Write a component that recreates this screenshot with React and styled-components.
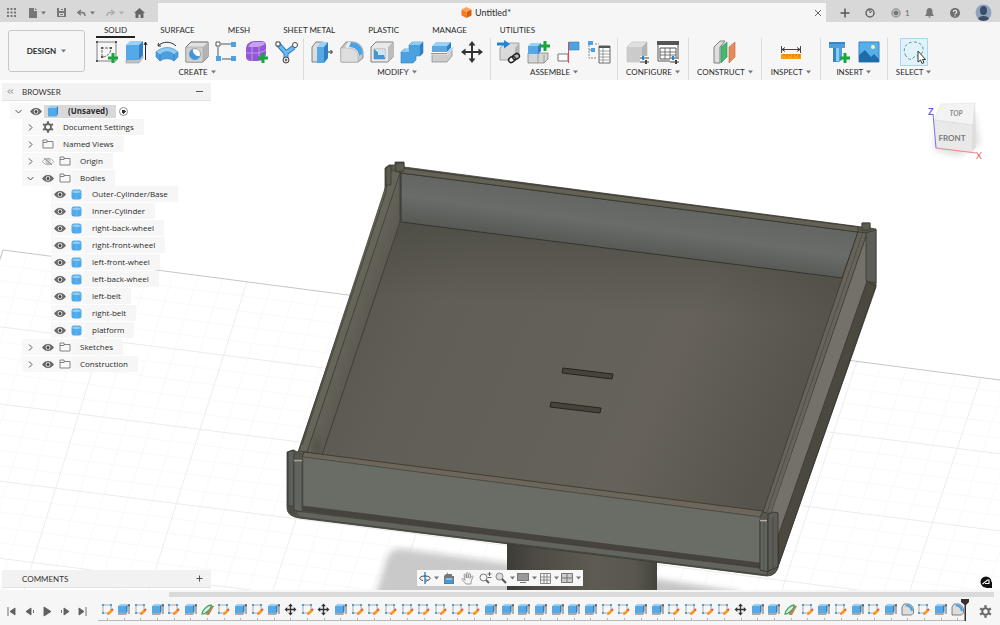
import React from 'react'
import styled, { createGlobalStyle } from 'styled-components'

const GlobalStyle = createGlobalStyle`
  * {
    box-sizing: border-box;
  }

  body {
    margin: 0;
    background: #fff;
    color: #2b2b2b;
    font-family: Lato, "Liberation Sans", sans-serif;
    font-size: 8px;
    line-height: 10px;
  }

  button {
    display: flex;
    align-items: center;
    justify-content: center;
    margin: 0;
    padding: 0;
    border: 0;
    background: none;
    color: inherit;
    font: inherit;
    cursor: pointer;
  }

  svg {
    display: block;
    flex: none;
  }

  ul {
    margin: 0;
    padding: 0;
    list-style: none;
  }
`

const Page = styled.div`
  display: flex;
  flex-direction: column;
  min-height: 100vh;
`

/* ---------- title bar ---------- */

const TitleBar = styled.header`
  display: flex;
  height: 22px;
  padding-top: 3px;
  background: #d8d8d8;
`

const QuickBar = styled.div`
  display: flex;
  align-items: center;
  gap: 2px;
  width: 158px;
  padding: 0 0 0 4px;
  color: #777;
`

const QuickButton = styled.button`
  height: 16px;
  width: ${props => props.$width || 20}px;
  gap: 4px;
  opacity: ${props => (props.$faded ? 0.45 : 1)};
`

const DocumentTab = styled.div`
  flex: 1;
  display: flex;
  align-items: center;
  padding: 0 4px 0 0;
  background: #f6f6f6;
`

const DocumentTitle = styled.h1`
  flex: 1;
  display: flex;
  align-items: center;
  justify-content: center;
  gap: 3px;
  margin: 0;
  font-size: 9px;
  font-weight: 400;
`

const AccountBar = styled.div`
  display: flex;
  align-items: center;
  justify-content: space-between;
  width: 174px;
  padding: 0 8px 0 14px;
  color: #666;
`

const Jobs = styled.button`
  gap: 4px;
`

/* ---------- ribbon ---------- */

const Ribbon = styled.div`
  display: flex;
  height: 58px;
  background: #f6f6f6;
`

const Workspace = styled.button`
  && {
    width: 77px;
    height: 42px;
    margin: 8px 6px 0 8px;
    gap: 5px;
    border: 1px solid #c8c8c8;
    border-radius: 3px;
    font-weight: 700;
  }
`

const RibbonBody = styled.div`
  flex: 1;
`

const Tabs = styled.nav`
  display: flex;
  gap: 17px;
  padding: 3px 0 0 5px;
`

const Tab = styled.a`
  padding: 0 8px 1px;
  border-bottom: 2px solid ${props => (props.$active ? '#222' : 'transparent')};
  color: #2b2b2b;
  text-decoration: none;
`

const Groups = styled.div`
  display: flex;
`

const Group = styled.section`
  display: flex;
  flex-direction: column;
  align-items: center;
  gap: 1px;
  height: 42px;
  padding: 0 ${props => props.$pad}px;
  border-right: 1px solid ${props => (props.$last ? 'transparent' : '#dcdcdc')};
`

const Tools = styled.div`
  display: flex;
`

const ToolButton = styled.button`
  width: 30px;
  height: 28px;
  ${props => props.$active && `
    && {
      width: 28px;
      background: #e2f1fb;
      border: 1px solid #a9d5f1;
    }
  `}
`

const Caption = styled.button`
  gap: 3px;
`

/* ---------- canvas ---------- */

const Canvas = styled.main`
  position: relative;
  flex: 1;
  display: flex;
  flex-direction: column;
  justify-content: space-between;
  min-height: 500px;
  padding: 3px 0 2px;
  overflow: hidden;
`

const Backdrop = styled.div`
  position: absolute;
  inset: 0;

  > svg {
    width: 100%;
    height: 100%;
  }
`

const Panel = styled.aside`
  position: relative;
  width: 211px;
`

const PanelHeader = styled.div`
  display: flex;
  align-items: center;
  height: 18px;
  margin-left: 2px;
  padding: 0 8px 0 5px;
  background: #f2f2f2;
  border-bottom: 1px solid #e2e2e2;
  color: #555;
`

const PanelTitle = styled.h2`
  flex: 1;
  margin: 0;
  padding-left: ${props => props.$indent}px;
  color: #333;
  font-size: 8px;
  font-weight: 400;
`

const Tree = styled.ul`
  display: flex;
  flex-direction: column;
  align-items: flex-start;
  gap: 1px;
  padding: ${props => (props.$root ? '2px 0 0' : '0')};
`

const Row = styled.div`
  display: flex;
  align-items: center;
  width: max-content;
  height: 16px;
  margin-left: ${props => 10 + props.$depth * 12}px;
  color: #2b2b2b;
`

const Slot = styled.span`
  display: flex;
  align-items: center;
  justify-content: center;
  width: 17px;
  height: 16px;
  background: ${props => (props.$clear ? 'transparent' : '#f8f8f8')};
`

const RowLabel = styled.span`
  display: flex;
  align-items: center;
  height: 16px;
  padding: 0 10px 0 7px;
  background: #f6f6f6;
  font-family: "Open Sans", "Noto Sans", sans-serif;
  font-size: 8px;
`

const Selected = styled.span`
  display: flex;
  align-items: center;
  height: 13px;
  background: #d9d9d9;

  ${Slot}, ${RowLabel} {
    height: 13px;
    background: none;
  }

  ${RowLabel} {
    padding-right: 8px;
    font-weight: 700;
  }
`

const Radio = styled.input`
  appearance: none;
  width: 9px;
  height: 9px;
  margin: 0 10px 0 3px;
  border: 1px solid #8a8f96;
  border-radius: 50%;
  background: radial-gradient(circle, #333 0 2px, #fff 2px);
`

const ViewCubeBox = styled.div`
  position: absolute;
  top: 16px;
  right: 10px;
`

const CanvasFooter = styled.div`
  position: relative;
  display: grid;
  grid-template-columns: 1fr auto 1fr;
  align-items: start;
`

const ViewBar = styled.div`
  display: flex;
  align-items: center;
  height: 16px;
  padding: 0 1px;
  background: #f7f7f7;
  color: #666;
`

const ViewButton = styled.button`
  width: ${props => (props.$menu ? 22 : 18)}px;
  height: 16px;
  gap: 3px;
`

const AssistButton = styled.button`
  justify-self: end;
  align-self: end;
  && {
    margin-right: 8px;
  }
`

/* ---------- timeline ---------- */

const Timeline = styled.footer`
  height: 35px;
  padding-top: 2px;
  background: #f6f6f6;
`

const ScrollTrack = styled.div`
  height: 5px;
  margin: 0 6px 0 169px;
  background: #dadada;
`

const TimelineBody = styled.div`
  display: flex;
  align-items: flex-start;
`

const Playback = styled.div`
  display: flex;
  justify-content: space-between;
  width: 82px;
  margin: 8px 12px 0 6px;
  color: #5f5f5f;
`

const Features = styled.div`
  flex: 1;
  display: flex;
  justify-content: space-between;
  margin-top: 5px;
  padding-bottom: 2px;
`

const Feature = styled.button`
  position: relative;
  width: 14px;
  height: 19px;

  && {
    padding-bottom: 5px;
  }

  /* the rail under the history, with one tick for each feature */
  &::before {
    content: '';
    position: absolute;
    bottom: 0;
    left: -2px;
    right: -2px;
    height: 1px;
    background: #b9b9b9;
  }

  &::after {
    content: '';
    position: absolute;
    bottom: 0;
    left: 7px;
    width: 1px;
    height: 3px;
    background: #b9b9b9;
  }
`

const Marker = styled.div`
  margin: 2px 0 0 -4px;
  position: relative;
`

const SettingsButton = styled.button`
  && {
    margin: 8px 8px 0 10px;
  }
`

/* ---------- icons ---------- */

const Caret = () => (
  <svg width="5" height="4" viewBox="0 0 5 4"><path d="M0 .5h5L2.500 3.500z" fill="#777" /></svg>
)

const Ico = ({ size = 24, box = 24, children }) => (
  <svg width={size} height={size} viewBox={`0 0 ${box} ${box}`} fill="none">{children}</svg>
)

const Plus = ({ x, y }) => (
  <path d={`M${x - 5} ${y}h10M${x} ${y - 5}v10`} stroke="#16a63c" strokeWidth="3" />
)

const Sliders = () => (
  <g>
    <path d="M14 18h9M14 22h9" stroke="#444" />
    <path d="M17 16v4" stroke="#1f86d6" strokeWidth="2" />
    <path d="M20 20v4" stroke="#444" strokeWidth="2" />
  </g>
)

const BlueBox = () => (
  <g>
    <path d="M2 6l4-4h12l-3 4z" fill="#9ad0f5" />
    <path d="M2 6h13v14H2z" fill="#56a9e6" />
    <path d="M15 6l3-4v13l-3 5z" fill="#2f7fc2" />
  </g>
)

const toolIcons = {
  sketch: (
    <Ico>
      <path d="M2 2h19v19H2z" stroke="#666" strokeWidth=".8" />
      <path d="M7 17V8h9c0 5-4 9-9 9z" stroke="#666" strokeDasharray="3 1" />
      <path d="M1 1h2v2H1zM20 1h2v2h-2zM1 20h2v2H1zM6 7h2v2H6zM15 7h2v2h-2zM6 16h2v2H6z" fill="#555" />
      <Plus x={18} y={18} />
    </Ico>
  ),
  extrude: (
    <Ico>
      <path d="M1 20l13-.5 4-4V18l-4 5H1z" fill="#c4c4c4" stroke="#888" strokeWidth=".5" />
      <path d="M1 5l4-4h13l-4 4z" fill="#9ad0f5" />
      <path d="M1 5h13v15H1z" fill="#56a9e6" />
      <path d="M14 5l4-4v14l-4 5z" fill="#2f7fc2" />
      <path d="M20.500 20V3M19 5l1.500-3L22 5" stroke="#222" />
    </Ico>
  ),
  revolve: (
    <Ico>
      <path d="M3 6c5-5 13-5 18 0M3 6l.5-3M3 6h3" stroke="#333" />
      <path d="M1 12c6-6 16-6 22 0l-4 3c-4-4-10-4-14 0z" fill="#8fcaf3" stroke="#3585c4" strokeWidth=".6" />
      <path d="M1 12l4 3v6l-4-4zM5 15c4-4 10-4 14 0v6c-4-3-10-3-14 0zM19 15l4-3v5l-4 4z" fill="#4ba1df" stroke="#3585c4" strokeWidth=".6" />
    </Ico>
  ),
  hole: (
    <Ico>
      <path d="M1 7l5-5h17v15l-5 5H1z" fill="#e2e2e2" stroke="#666" />
      <path d="M18 7l5-5v15l-5 5z" fill="#b4b4b4" />
      <path d="M1 7h17v15H1z" fill="#d0d0d0" stroke="#999" strokeWidth=".5" />
      <circle cx="10" cy="14" r="5.500" fill="#fafafa" stroke="#777" strokeWidth=".6" />
      <path d="M8 9a5.500 5.500 0 107 7c-4 1-8-3-7-7z" fill="#3f97da" />
    </Ico>
  ),
  pattern: (
    <Ico>
      <path d="M6 4h10M3 7v9M7 19h9" stroke="#555" />
      <path d="M1 2h4v4H1z" fill="#fff" stroke="#555" />
      <path d="M16 2h5v5h-5zM1 16h5v5H1zM16 16h5v5h-5z" fill="#4ba3e3" />
    </Ico>
  ),
  form: (
    <Ico>
      <path d="M1 9c0-5 4-8 9-8h5c4 0 6 1 6 5v7c0 5-3 8-8 8H7c-4 0-6-1-6-5z" fill="#9257d6" />
      <path d="M3 7c2-4 5-5 9-5h3c3 0 4 0 5 2-3 2-5 3-8 3z" fill="#c6a1f0" />
      <path d="M1 13h13l7-3M7 7v14M14 7v14M8 2L6 7M14 2l-2 5" stroke="#c9a8ef" strokeWidth=".8" />
      <Plus x={18} y={18} />
    </Ico>
  ),
  pipe: (
    <Ico>
      <path d="M3 4l8 9 8-6M11 12v7" stroke="#2f7fc2" strokeWidth="5" />
      <path d="M3 4l8 9 8-6M11 12v7" stroke="#6bb7ee" strokeWidth="3" />
      <path d="M1 2h4v4H1z" fill="#fff" stroke="#444" />
      <circle cx="20" cy="5" r="2.500" fill="#fff" stroke="#444" />
      <circle cx="11" cy="20" r="3" fill="#ddd" stroke="#444" />
      <circle cx="11" cy="20" r="1" fill="#444" />
    </Ico>
  ),
  pressPull: (
    <Ico>
      <path d="M2 7l4-5h7v20H2z" fill="#ddd" stroke="#666" strokeWidth=".8" />
      <path d="M7 7l4-5h7l-4 5z" fill="#9ad0f5" />
      <path d="M7 7h7v16H7z" fill="#56a9e6" />
      <path d="M14 7l4-5v16l-4 5z" fill="#2f7fc2" />
      <path d="M18 12h4M20.500 10l2 2-2 2" stroke="#222" />
    </Ico>
  ),
  fillet: (
    <Ico>
      <path d="M1 8l5-6h6c7 0 11 5 11 11v5l-5 4H1z" fill="#c9c9c9" stroke="#777" strokeWidth=".8" />
      <path d="M8 2h4c7 0 11 5 11 11l-5 3c0-5-4-8-9-8H5z" fill="#eee" />
      <path d="M11 2c7 0 11 4 12 11l-4 3c0-5-4-9-10-9z" fill="#4ba3e3" />
      <path d="M1 8h7c6 0 10 4 10 9v5H1z" fill="#dedede" stroke="#aaa" strokeWidth=".5" />
    </Ico>
  ),
  shell: (
    <Ico>
      <path d="M1 7l5-5h17v15l-5 5H1z" fill="#e9e9e9" stroke="#666" strokeWidth=".8" />
      <path d="M18 7l5-5v15l-5 5z" fill="#bdbdbd" />
      <path d="M4 9h11v10H4z" fill="#fff" stroke="#888" strokeWidth=".6" />
      <path d="M4 9l4 3v3h6l1 4H4z" fill="#3f97da" />
      <path d="M8 10h7v5H8z" fill="#cbe5f8" />
    </Ico>
  ),
  combine: (
    <Ico>
      <path d="M9 5l3-3h11v11l-3 3h-4v4l-3 3H1V12l3-3h5z" fill="#4ba1df" stroke="#3585c4" strokeWidth=".6" />
      <path d="M9 5l3-3h11l-3 3zM1 12l3-3h5v3z" fill="#8fcaf3" />
      <path d="M20 5l3-3v11l-3 3z" fill="#2f7fc2" />
    </Ico>
  ),
  split: (
    <Ico>
      <path d="M2 14h14l6-5v7l-5 6H2z" fill="#cdcdcd" stroke="#777" strokeWidth=".6" />
      <path d="M2 6l4-4h15l-4 4z" fill="#9ad0f5" />
      <path d="M2 6h15v6H2z" fill="#56a9e6" />
      <path d="M17 6l4-4v6l-4 4z" fill="#2f7fc2" />
      <path d="M1 13.500h16l6-6" stroke="#fff" strokeWidth="2" />
      <path d="M1 13.500h16l6-6" stroke="#2f8fdd" strokeWidth=".8" />
    </Ico>
  ),
  move: (
    <Ico>
      <path d="M12 4v16M4 12h16" stroke="#333" strokeWidth="2" />
      <path d="M12 1l3.500 4.500h-7zM12 23l3.500-4.500h-7zM1 12l4.500-3.500v7zM23 12l-4.500-3.500v7z" fill="#333" />
    </Ico>
  ),
  insertLink: (
    <Ico>
      <path d="M3 8l5-5h14v12l-4 5H3z" fill="#dadada" stroke="#888" strokeWidth=".7" />
      <path d="M18 8l4-5v12l-4 5z" fill="#b5b5b5" />
      <path d="M0 4h8" stroke="#1f86d6" strokeWidth="3" />
      <path d="M7 0l6 4-6 4.500z" fill="#1f86d6" />
      <g transform="rotate(-35 17 18)" stroke="#222" strokeWidth="1.500">
        <rect x="11" y="15.500" width="7" height="5" rx="2.500" fill="#f6f6f6" />
        <rect x="16" y="15.500" width="7" height="5" rx="2.500" />
      </g>
    </Ico>
  ),
  newComponent: (
    <Ico>
      <path d="M1 13h20v6l-4 4H1z" fill="#d5d5d5" stroke="#777" strokeWidth=".7" />
      <path d="M11 13v10M17 15v8" stroke="#888" strokeWidth=".7" />
      <path d="M1 6l3-3h10l-3 3z" fill="#9ad0f5" />
      <path d="M1 6h10v8H1z" fill="#56a9e6" />
      <path d="M11 6l3-3v8l-3 3z" fill="#2f7fc2" />
      <Plus x={18} y={6} />
    </Ico>
  ),
  joint: (
    <Ico>
      <path d="M1 14h10v7H1z" fill="#fff" stroke="#777" />
      <path d="M12 2h10v8H12z" fill="#4ba3e3" stroke="#3585c4" strokeWidth=".6" />
      <path d="M11.500 2v21" stroke="#e0484b" />
    </Ico>
  ),
  bom: (
    <Ico>
      <path d="M1 1h5v4H1zM4 8h4v4H4z" fill="#4ba3e3" />
      <path d="M2 5v13h8M2 10h3M8 4h4" stroke="#888" strokeDasharray="2 1" />
      <path d="M12 6h11v17H12z" fill="#fff" stroke="#666" />
      <path d="M12 6h11v2H12z" fill="#555" />
      <path d="M12 11h11M12 14h11M12 17h11M12 20h11M16 8v15" stroke="#888" strokeWidth=".8" />
    </Ico>
  ),
  configureBox: (
    <Ico>
      <path d="M1 7l5-5h15v14l-5 6H1z" fill="#e0e0e0" stroke="#c0c0c0" strokeWidth=".7" />
      <path d="M1 7h15v15H1z" fill="#cbcbcb" />
      <path d="M16 7l5-5v14l-5 6z" fill="#b5b5b5" />
      <path d="M14 16h9v8h-9z" fill="#f6f6f6" />
      <Sliders />
    </Ico>
  ),
  configureTable: (
    <Ico>
      <path d="M2 2h20v19H2z" fill="#fff" stroke="#555" />
      <path d="M1 1h22v4H1z" fill="#555" />
      <path d="M4 8h16v11H4z" stroke="#555" />
      <path d="M4 12h16M4 15h16M9 8v11M14 8v11" stroke="#555" strokeWidth=".8" />
      <path d="M14 17h9v7h-9z" fill="#f6f6f6" />
      <Sliders />
    </Ico>
  ),
  construct: (
    <Ico>
      <path d="M1 7l6-6h5l-5 6v16H1z" fill="#dedede" stroke="#666" strokeWidth=".8" />
      <path d="M8 7l6-5v15l-6 6z" fill="#45b871" stroke="#2c8c52" strokeWidth=".6" />
      <path d="M16 7l6-5v15l-6 6z" fill="#e58a58" stroke="#b9643a" strokeWidth=".6" />
    </Ico>
  ),
  measure: (
    <Ico>
      <path d="M2.500 6v7M21.500 6v7M3 9.500h18M6 7.500l-3 2 3 2M18 7.500l3 2-3 2" stroke="#333" strokeWidth=".9" />
      <path d="M2 14h20v5H2z" fill="#f2a10f" />
      <path d="M5 14v2M8 14v3M11 14v2M14 14v3M17 14v2M20 14v3" stroke="#a56e00" strokeWidth=".6" />
    </Ico>
  ),
  insertDerive: (
    <Ico>
      <path d="M2 2h16v6h-3v12l-3 2H6V8H2z" fill="#4ba1df" />
      <path d="M2 2h16v2H2zM6 8h3v14H6z" fill="#3585c4" />
      <path d="M9 8h3v13H9z" fill="#8fcaf3" />
      <Plus x={18} y={18} />
    </Ico>
  ),
  picture: (
    <Ico>
      <path d="M2 2h20v20H2z" fill="#56b0ec" stroke="#3585c4" />
      <path d="M2 15l6-5 6 7 3-3 5 5v3H2z" fill="#1f6ca8" />
      <circle cx="16" cy="7" r="2" fill="#fff3b0" />
    </Ico>
  ),
  select: (
    <Ico>
      <path d="M4 16c-4-6-1-14 8-14 8 0 11 7 8 11-2 4-7 2-9 5-2 3-5 1-7-2z" stroke="#3db07a" strokeDasharray="3 2" />
      <path d="M16 11v11l2.500-2 1.500 3.500 2-1-1.500-3h3z" fill="#fff" stroke="#222" strokeWidth=".9" />
    </Ico>
  )
}

const featureIcons = {
  s: (
    <Ico size={13} box={13}>
      <path d="M2 2h8v8H2z" stroke="#999" strokeWidth=".8" />
      <path d="M1 1h2v2H1zM9 1h2v2H9zM1 9h2v2H1z" fill="#4f9fdc" />
      <path d="M7 11l4-4" stroke="#f6a01a" strokeWidth="2.500" />
      <path d="M6 12l2-1-1-1z" fill="#d9443a" />
      <path d="M10.500 7.500l1.500-1.500" stroke="#e8573f" strokeWidth="2" />
    </Ico>
  ),
  e: (
    <Ico size={13} box={13}>
      <path d="M1 3l2-2h7L9 3z" fill="#9ad0f5" />
      <path d="M1 3h8v7H1z" fill="#56a9e6" />
      <path d="M9 3l1.500-2v7L9 11z" fill="#2f7fc2" />
      <path d="M1 10h8l1.500-2v2L9 12H1z" fill="#aaa" />
      <path d="M12 11V2M11 3.500L12 1l1 2.500" stroke="#444" strokeWidth=".8" />
    </Ico>
  ),
  p: (
    <Ico size={13} box={13}>
      <path d="M4 12l4-3 5-6-4-1z" fill="#b8824f" />
      <path d="M1 11c0-3 5-9 9-9 1 3-5 9-9 9z" fill="#d5f0de" stroke="#3fa165" strokeWidth="1.300" />
      <path d="M5 12h3l5-9h-2z" fill="#b8824f" />
    </Ico>
  ),
  m: (
    <Ico size={13} box={24}>
      <path d="M12 4v16M4 12h16" stroke="#333" strokeWidth="2.500" />
      <path d="M12 1l4.500 5h-9zM12 23l4.500-5h-9zM1 12l5-4.500v9zM23 12l-5-4.500v9z" fill="#333" />
    </Ico>
  ),
  f: (
    <Ico size={13} box={13}>
      <path d="M1 4l2-3h4c3 0 5.500 3 5.500 6v3l-2 2H1z" fill="#ddd" stroke="#666" strokeWidth=".8" />
      <path d="M5 1.500c4 0 6.500 2 7 6l-2 1c-.5-3-2-5-5.500-5z" fill="#4ba3e3" />
    </Ico>
  )
}

const GearShape = ({ size }) => (
  <svg width={size} height={size} viewBox="0 0 12 12">
    <g stroke="#666" fill="none">
      <circle cx="6" cy="6" r="3" strokeWidth="1.800" />
      <path d="M6 .3v2M6 9.700v2M1.060 3.150l1.700 1M9.240 7.850l1.700 1M1.060 8.850l1.700-1M9.240 4.150l1.700-1" strokeWidth="2.200" />
    </g>
  </svg>
)

const Chevron = ({ open }) => (
  <svg width="7" height="7" viewBox="0 0 7 7" fill="none">
    <path d={open ? 'M.5 2l3 3 3-3' : 'M2 .5l3 3-3 3'} stroke="#555" />
  </svg>
)

const Eye = ({ hidden }) => (
  <svg width="12" height="9" viewBox="0 0 12 9">
    <path d="M.5 4.500C3 .3 9 .3 11.500 4.500 9 8.700 3 8.700.5 4.500z" fill={hidden ? '#fff' : '#6a6a6a'} stroke={hidden ? '#999' : '#666'} strokeWidth=".8" />
    <circle cx="6" cy="4.500" r="2.300" fill="#fff" stroke={hidden ? '#888' : 'none'} strokeWidth=".6" />
    <circle cx="6" cy="4.500" r="1.500" fill={hidden ? '#ccc' : '#444'} />
    {hidden && <path d="M2 1l8 7" stroke="#777" strokeWidth=".8" />}
  </svg>
)

const Folder = () => (
  <svg width="12" height="10" viewBox="0 0 12 10" fill="none">
    <path d="M1 9V1h4v1.500h6V9zM1 3.500h4l1-1" stroke="#777" strokeWidth=".9" />
  </svg>
)

const Body = () => (
  <svg width="11" height="11" viewBox="0 0 11 11">
    <rect x=".5" y=".5" width="10" height="10" rx="2.500" fill="#4fa9ea" />
    <path d="M1 3c1-2 8-2 9 0-1 1.500-8 1.500-9 0z" fill="#8fcdf7" />
    <path d="M5.500 4.500v6" stroke="#6fbcf2" strokeWidth=".7" />
  </svg>
)

const Component = () => (
  <svg width="12" height="12" viewBox="0 0 12 12">
    <path d="M1 3l2-2h8L9.500 3z" fill="#9ad0f5" />
    <path d="M1 3h8.500v8.500H1z" fill="#4fa9ea" />
    <path d="M9.500 3L11 1v8l-1.500 2.500z" fill="#2b7fc4" />
  </svg>
)

const rowIcons = { folder: <Folder />, gear: <GearShape size={12} />, body: <Body /> }

/* ---------- data ---------- */

const tabs = ['SOLID', 'SURFACE', 'MESH', 'SHEET METAL', 'PLASTIC', 'MANAGE', 'UTILITIES']

const groups = [
  { title: 'CREATE', pad: 1, tools: ['sketch', 'extrude', 'revolve', 'hole', 'pattern', 'form', 'pipe'] },
  { title: 'MODIFY', pad: 3, tools: ['pressPull', 'fillet', 'shell', 'combine', 'split', 'move'] },
  { title: 'ASSEMBLE', pad: 3, tools: ['insertLink', 'newComponent', 'joint', 'bom'] },
  { title: 'CONFIGURE', pad: 5, tools: ['configureBox', 'configureTable'] },
  { title: 'CONSTRUCT', pad: 8, tools: ['construct'] },
  { title: 'INSPECT', pad: 9, tools: ['measure'] },
  { title: 'INSERT', pad: 3, tools: ['insertDerive', 'picture'] },
  { title: 'SELECT', pad: 8, tools: ['select'], active: true }
]

const bodies = [
  'Outer-Cylinder/Base',
  'Inner-Cylinder',
  'right-back-wheel',
  'right-front-wheel',
  'left-front-wheel',
  'left-back-wheel',
  'left-belt',
  'right-belt',
  'platform'
]

const nodes = [
  { label: 'Document Settings', icon: 'gear' },
  { label: 'Named Views', icon: 'folder' },
  { label: 'Origin', icon: 'folder', eye: 'hidden' },
  { label: 'Bodies', icon: 'folder', eye: 'shown', children: bodies },
  { label: 'Sketches', icon: 'folder', eye: 'shown' },
  { label: 'Construction', icon: 'folder', eye: 'shown' }
]

const featureNames = { s: 'Sketch', e: 'Extrude', p: 'Plane', m: 'Move', f: 'Fillet' }
const history = 'sesesepsesemsmesssssssseeeeeeesseessssmeepsesesefsef'.split('')

/* ---------- scene ---------- */

const edgeTop = [3, 125, 247, 369, 491, 613, 735, 857, 981, 1105]
const edgeBottom = [-100, 24, 149, 273, 397, 522, 650, 782, 910, 1038]
const topY = x => 250 + (x - 3) * 0.13

const majorLines = []
const minorLines = []

edgeTop.forEach((x, i) => {
  majorLines.push(`M${x} ${topY(x)}L${edgeBottom[i]} 590`)
  if (i === edgeTop.length - 1) return
  for (let j = 1; j < 5; j++) {
    const a = x + (edgeTop[i + 1] - x) * j / 5
    const b = edgeBottom[i] + (edgeBottom[i + 1] - edgeBottom[i]) * j / 5
    minorLines.push(`M${a} ${topY(a)}L${b} 590`)
  }
})

for (let k = 1; k < 25; k++) {
  const x = 3 - 5 * k
  const y = 250 + 14.8 * k
  const line = `M${x} ${y}L1100 ${y + (1100 - x) * 0.127}`
  ;(k % 5 ? minorLines : majorLines).push(line)
}

const Scene = () => (
  <svg viewBox="0 80 1000 510" preserveAspectRatio="xMidYMid slice" role="img" aria-label="platform">
    <defs>
      <linearGradient id="floor" x1="0" y1="0" x2="1" y2="0.250">
        <stop offset="0" stopColor="#55534b" />
        <stop offset=".28" stopColor="#605e56" />
        <stop offset=".75" stopColor="#66625a" />
        <stop offset="1" stopColor="#57544c" />
      </linearGradient>
      <linearGradient id="floorShade" x1="0" y1="0" x2="-0.100" y2="1">
        <stop offset="0" stopColor="#45443d" stopOpacity=".5" />
        <stop offset=".25" stopColor="#45443d" stopOpacity="0" />
      </linearGradient>
      <linearGradient id="backWall" gradientUnits="userSpaceOnUse" x1="630" y1="200" x2="623" y2="252">
        <stop offset="0" stopColor="#626561" />
        <stop offset=".5" stopColor="#696c68" />
        <stop offset="1" stopColor="#555853" />
      </linearGradient>
      <linearGradient id="leftWall" gradientUnits="userSpaceOnUse" x1="345" y1="300" x2="372" y2="309">
        <stop offset="0" stopColor="#6b695f" />
        <stop offset="1" stopColor="#5b5950" />
      </linearGradient>
      <linearGradient id="cylinder" x1="0" y1="0" x2="1" y2="0">
        <stop offset="0" stopColor="#3c3b36" />
        <stop offset=".18" stopColor="#4c4a43" />
        <stop offset=".6" stopColor="#5e5c52" />
        <stop offset=".85" stopColor="#59574d" />
        <stop offset="1" stopColor="#45443c" />
      </linearGradient>
      <filter id="soft"><feGaussianBlur stdDeviation="3" /></filter>
    </defs>

    <path d={minorLines.join('')} stroke="#f9f9f9" fill="none" />
    <path d={majorLines.join('')} stroke="#ececec" fill="none" />
    <path d="M0 259L3 250L1000 380" stroke="#c6c6c6" fill="none" />

    <g filter="url(#soft)">
      <path d="M374 600l13-42q4-11 16-9l110 15v40z" fill="#c9c9c9" />
      <path d="M650 578l90 14v10h-90z" fill="#c4c4c4" />
    </g>
    <path d="M507 540h150v50H507z" fill="url(#cylinder)" />

    {/* outer silhouette */}
    <path
      d="M385 168l4-3h6v-3h9v5l458 60v-4h8v5l6 1v58L779 564q-2 12-12 12L299 518q-12-2-12-10v-56l6-2 5 2L385 194z"
      fill="#57564c"
      stroke="#3a3932"
      strokeWidth=".8"
    />
    <path d="M401 222L842 279 763 511 322 454z" fill="url(#floor)" />
    <path d="M401 222L842 279 763 511 322 454z" fill="url(#floorShade)" />
    <path d="M401 173L858 232 842 278 401 222z" fill="url(#backWall)" stroke="#35352f" />
    <path d="M400 172v50L322 455l-15-3z" fill="url(#leftWall)" stroke="#3a3932" strokeWidth=".8" />
    <path d="M316 430l5 22-9 1z" fill="#383731" opacity=".35" filter="url(#soft)" />
    <path d="M391 170l9 3L307 452l-8-1z" fill="#66655a" stroke="#3f3e37" strokeWidth=".7" />
    <path d="M388 172l-2 20-84 253" stroke="#3f3e37" strokeWidth=".8" fill="none" />
    <path d="M401 168l457 59v5L401 173z" fill="#646255" stroke="#37362f" strokeWidth=".7" />
    <path d="M396 163h8v8h-8zM386 168l5-3v20h-5z" fill="#5c5b50" stroke="#3b3a33" strokeWidth=".8" />

    {/* right side */}
    <path d="M858 232l9 1L771 514l-8-2z" fill="#66645a" stroke="#3a3932" strokeWidth=".8" />
    <path d="M863 232L767 512" stroke="#46453d" strokeWidth=".7" />
    <path d="M867 235v46L778 540v-28l-7 2z" fill="#74716a" />
    <path d="M867 281l9 4L779 564l-1-28z" fill="#4a483f" stroke="#36352e" strokeWidth=".7" />
    <path d="M866 233l10-3v53l-10-2z" fill="#5b5d59" stroke="#3a3a34" strokeWidth=".8" />
    <path d="M862 223h8v7h-8z" fill="#5c5b50" stroke="#3b3a33" strokeWidth=".8" />

    {/* front side */}
    <path d="M304 452L763 511 760 517 302 457z" fill="#6c665b" stroke="#38362f" strokeWidth=".8" />
    <path d="M303 457L760 517v46L303 506z" fill="#6a6c66" stroke="#4b4b44" strokeWidth=".6" />
    <path d="M303 506L760 563v7L303 511z" fill="#45433b" />
    <path d="M296 511l464 57 8 2-1 5L299 517z" fill="#62645e" stroke="#3f3e37" strokeWidth=".7" />
    <path d="M288 452l6-2v56h-6z" fill="#5e605b" stroke="#363530" strokeWidth=".8" />
    <path d="M288 506l6 1 2 9q-8-2-8-8z" fill="#4c4c45" />
    <path d="M294 460h8v52l-8-2z" fill="#62645e" stroke="#3b3b35" strokeWidth=".8" />
    <path d="M294 460.500h8" stroke="#aaa598" strokeWidth="1.500" />
    <path d="M760 520h8v52l-8-2z" fill="#62645e" stroke="#2f2f29" strokeWidth=".8" />
    <path d="M764 522v49" stroke="#47473f" strokeWidth=".7" />
    <path d="M760 520.500h7" stroke="#b5b0a2" strokeWidth="1.500" />
    <path d="M768 514l5-2 5 1v54l-10 4z" fill="#5c5d57" stroke="#33322c" strokeWidth=".8" />
    <path d="M773 517v51" stroke="#44443d" strokeWidth=".7" />

    {/* slots */}
    <path d="M563 368l50 6-1 5-50-6zM551 402l50 6-1 5-50-6z" fill="#45433c" stroke="#25241f" />
  </svg>
)

const ViewCube = () => (
  <svg width="66" height="66" viewBox="924 96 66 66" fontFamily="Lato, sans-serif">
    <defs>
      <filter id="cubeShadow"><feGaussianBlur stdDeviation="3" /></filter>
    </defs>
    <path d="M938 118l36-6 6 32-22 12-24-6z" fill="#ddd" filter="url(#cubeShadow)" />
    <path d="M941 104l34-1-2 22-39-5z" fill="#f3f3f3" stroke="#e2e2e2" strokeWidth=".6" />
    <path d="M934 120l39 5-1 27-36-4z" fill="#e9e9ea" stroke="#d8d8d8" strokeWidth=".6" />
    <path d="M975 103l-2 22-1 27 4-5z" fill="#dedede" />
    <path d="M933 114l3 34" stroke="#7777ee" />
    <path d="M936 148l40 5" stroke="#ee8888" />
    <text x="956" y="116" fontSize="7" fontWeight="700" fontStyle="italic" fill="#8a8a8a" textAnchor="middle">TOP</text>
    <text x="952" y="141" fontSize="8" fontWeight="700" fill="#7c7c7c" textAnchor="middle">FRONT</text>
    <text x="928" y="115" fontSize="9" fontWeight="700" fill="#5f5fe6">Z</text>
    <text x="976" y="159" fontSize="9" fill="#e05555">X</text>
  </svg>
)

/* ---------- page parts ---------- */

const Header = () => (
  <TitleBar>
    <QuickBar>
      <QuickButton aria-label="Data panel" $width={14}>
        <svg width="9" height="9" viewBox="0 0 9 9"><path d="M0 0h2v2H0zM3.500 0h2v2h-2zM7 0h2v2H7zM0 3.500h2v2H0zM3.500 3.500h2v2h-2zM7 3.500h2v2H7zM0 7h2v2H0zM3.500 7h2v2h-2zM7 7h2v2H7z" fill="#777" /></svg>
      </QuickButton>
      <QuickButton aria-label="File" $width={34}>
        <svg width="8" height="10" viewBox="0 0 8 10"><path d="M0 0h5v3h3v7H0zM6 0l2 2H6z" fill="#777" /></svg>
        <Caret />
      </QuickButton>
      <QuickButton aria-label="Save" $width={10}>
        <svg width="9" height="9" viewBox="0 0 9 9"><path d="M0 0h9v9H0z" fill="#777" /><path d="M2 0h5v3H2zM2 5h5v3H2z" fill="#d8d8d8" /><path d="M3 6.500h3M4 1.500h2" stroke="#777" /></svg>
      </QuickButton>
      <QuickButton aria-label="Undo" $width={36}>
        <svg width="9" height="8" viewBox="0 0 9 8" fill="none"><path d="M4 1L1 3.500 4 6M1 3.500h4c2 0 3 1 3 3.500" stroke="#777" strokeWidth="1.500" /></svg>
        <Caret />
      </QuickButton>
      <QuickButton aria-label="Redo" $width={18} $faded>
        <svg width="9" height="8" viewBox="0 0 9 8" fill="none"><path d="M5 1l3 2.500L5 6M8 3.500H4C2 3.500 1 4.500 1 7" stroke="#777" strokeWidth="1.500" /></svg>
        <Caret />
      </QuickButton>
      <QuickButton aria-label="Home" $width={26}>
        <svg width="11" height="10" viewBox="0 0 11 10"><path d="M5.500 0L11 5H9.500v5h-3V6.500h-2V10h-3V5H0z" fill="#666" /></svg>
      </QuickButton>
    </QuickBar>
    <DocumentTab>
      <DocumentTitle>
        <svg width="11" height="11" viewBox="0 0 11 11"><path d="M5.500 0l5 2.500-5 2.500-5-2.500z" fill="#ffa15c" /><path d="M.5 2.500l5 2.500v6l-5-2.500z" fill="#f47b20" /><path d="M10.500 2.500l-5 2.500v6l5-2.500z" fill="#dd5a0b" /></svg>
        Untitled*
      </DocumentTitle>
      <button aria-label="Close">
        <svg width="8" height="8" viewBox="0 0 8 8"><path d="M1 1l6 6M7 1L1 7" stroke="#666" /></svg>
      </button>
    </DocumentTab>
    <AccountBar>
      <button aria-label="New tab">
        <svg width="10" height="10" viewBox="0 0 10 10"><path d="M5 .5v9M.5 5h9" stroke="#555" strokeWidth="1.500" /></svg>
      </button>
      <button aria-label="Extensions">
        <svg width="10" height="10" viewBox="0 0 10 10" fill="none"><circle cx="5" cy="5" r="4" stroke="#666" strokeWidth="1.500" /><path d="M2 2h3v3M5 5l2-2" stroke="#666" /></svg>
      </button>
      <Jobs aria-label="Job status, 1">
        <svg width="10" height="10" viewBox="0 0 10 10" fill="none"><circle cx="5" cy="5" r="4" stroke="#999" strokeWidth="1.500" /><circle cx="5" cy="5" r="2.500" fill="#777" /></svg>
        1
      </Jobs>
      <button aria-label="Notifications">
        <svg width="9" height="10" viewBox="0 0 9 10"><path d="M4.500 0c2 0 3 1.500 3 4 0 2 .5 2.500 1.500 4H0c1-1.500 1.500-2 1.500-4 0-2.500 1-4 3-4zM3 8.500h3L4.500 10z" fill="#777" /></svg>
      </button>
      <button aria-label="Help">
        <svg width="10" height="10" viewBox="0 0 10 10" fill="none"><circle cx="5" cy="5" r="5" fill="#707070" /><path d="M3.300 4c0-2.200 3.500-2.200 3.500 0C6.800 5 5 5 5 6.300M5 7.200v1.200" stroke="#eee" strokeWidth="1.100" /></svg>
      </button>
      <button aria-label="Account">
        <svg width="17" height="17" viewBox="0 0 17 17"><circle cx="8.500" cy="8.500" r="8" fill="#8fa3bd" /><ellipse cx="8.500" cy="6.500" rx="3.500" ry="4.500" fill="#3b4d68" /><path d="M3 15c1-4 10-4 11 0-3 2.500-8 2.500-11 0z" fill="#3b4d68" /></svg>
      </button>
    </AccountBar>
  </TitleBar>
)

const Toolbar = () => (
  <Ribbon>
    <Workspace>DESIGN <Caret /></Workspace>
    <RibbonBody>
      <Tabs>
        {tabs.map((tab, i) => <Tab key={tab} href="#" $active={i === 0}>{tab}</Tab>)}
      </Tabs>
      <Groups>
        {groups.map((group, i) => (
          <Group key={group.title} $pad={group.pad} $last={i === groups.length - 1}>
            <Tools>
              {group.tools.map(tool => (
                <ToolButton key={tool} aria-label={tool} $active={group.active}>{toolIcons[tool]}</ToolButton>
              ))}
            </Tools>
            <Caption>{group.title} <Caret /></Caption>
          </Group>
        ))}
      </Groups>
    </RibbonBody>
  </Ribbon>
)

const Node = ({ node }) => (
  <li>
    <Row $depth={1}>
      <Slot><Chevron open={Boolean(node.children)} /></Slot>
      {node.eye && <Slot><Eye hidden={node.eye === 'hidden'} /></Slot>}
      <Slot>{rowIcons[node.icon]}</Slot>
      <RowLabel>{node.label}</RowLabel>
    </Row>
    {node.children && (
      <Tree>
        {node.children.map(label => (
          <li key={label}>
            <Row $depth={2}>
              <Slot $clear />
              <Slot><Eye /></Slot>
              <Slot>{rowIcons.body}</Slot>
              <RowLabel>{label}</RowLabel>
            </Row>
          </li>
        ))}
      </Tree>
    )}
  </li>
)

const Browser = () => (
  <Panel>
    <PanelHeader>
      <svg width="7" height="5" viewBox="0 0 7 5"><path d="M3 .5L1 2.500l2 2M6 .5L4 2.500l2 2" stroke="#777" fill="none" /></svg>
      <PanelTitle $indent={8}>BROWSER</PanelTitle>
      <button aria-label="Collapse"><svg width="7" height="7" viewBox="0 0 7 7"><path d="M0 3.500h7" stroke="#555" /></svg></button>
    </PanelHeader>
    <Tree $root>
      <li>
        <Row $depth={0}>
          <Slot><Chevron open /></Slot>
          <Slot><Eye /></Slot>
          <Selected>
            <Slot><Component /></Slot>
            <RowLabel>(Unsaved)</RowLabel>
          </Selected>
          <Radio type="radio" aria-label="Activate component" defaultChecked />
        </Row>
        <Tree>
          {nodes.map(node => <Node key={node.label} node={node} />)}
        </Tree>
      </li>
    </Tree>
  </Panel>
)

const Navigation = () => (
  <ViewBar>
    <ViewButton aria-label="Orbit" $menu>
      <svg width="12" height="12" viewBox="0 0 12 12" fill="none"><path d="M6 0v12" stroke="#2f8fdd" strokeWidth="1.500" /><path d="M4 8.500C-1 7.500 0 4 6 4s7 3.500 2 4.500M6.500 10L8 8.500 6.500 7" stroke="#444" /></svg>
      <Caret />
    </ViewButton>
    <ViewButton aria-label="Look at">
      <svg width="12" height="12" viewBox="0 0 12 12"><path d="M1 4l2-2h1l1-2v2h4v2h2v8H1z" fill="#777" /><path d="M2 6h8v5H2z" fill="#3f9be2" /><path d="M3 7h6" stroke="#bfe0f7" /></svg>
    </ViewButton>
    <ViewButton aria-label="Pan">
      <svg width="13" height="13" viewBox="0 0 13 13" fill="none"><path d="M5 12L1 7.500c-.5-1 .8-1.500 1.500-.7L4 8.300 3 3c0-1.200 1.300-1.200 1.600 0L5.500 6V1.500c0-1.300 1.600-1.300 1.600 0V6l1-3.800c.3-1.200 1.700-.8 1.500.4L9 6.500l1.500-2.200c.6-1 1.800-.4 1.400.6L10 10v2z" fill="#f4f4f4" stroke="#888" strokeWidth=".8" /></svg>
    </ViewButton>
    <ViewButton aria-label="Zoom">
      <svg width="13" height="12" viewBox="0 0 13 12" fill="none"><circle cx="4.500" cy="5.500" r="3.500" stroke="#777" /><path d="M7 8l3 3" stroke="#666" strokeWidth="2" /><path d="M10.500 0v4M8.500 2h4M8.500 5.500h4" stroke="#555" strokeWidth=".9" /></svg>
    </ViewButton>
    <ViewButton aria-label="Zoom window" $menu>
      <svg width="12" height="12" viewBox="0 0 12 12" fill="none"><circle cx="4.500" cy="4.500" r="3.500" fill="#ddd" stroke="#888" /><path d="M7 7l4 4" stroke="#555" strokeWidth="2" /></svg>
      <Caret />
    </ViewButton>
    <ViewButton aria-label="Display settings" $menu>
      <svg width="12" height="10" viewBox="0 0 12 10"><path d="M0 0h12v8H0z" fill="#777" /><path d="M1 1h10v6H1z" fill="#999" /><path d="M3 9.500h6" stroke="#777" /></svg>
      <Caret />
    </ViewButton>
    <ViewButton aria-label="Grid and snaps" $menu>
      <svg width="11" height="11" viewBox="0 0 11 11" fill="none"><path d="M.5.5h10v10H.5zM4 0v11M7 0v11M0 4h11M0 7h11" stroke="#888" /></svg>
      <Caret />
    </ViewButton>
    <ViewButton aria-label="Viewports" $menu>
      <svg width="12" height="10" viewBox="0 0 12 10"><path d="M.5.5h11v9H.5z" fill="#ccc" stroke="#777" /><path d="M6 0v10M0 5h12" stroke="#777" /></svg>
      <Caret />
    </ViewButton>
  </ViewBar>
)

const playback = [
  ['To start', 'M1 0v9M8 1v7L3 4.500z'],
  ['Step back', 'M6 1v7L1 4.500zM8.500 3v3'],
  ['Play', 'M2 0v9L9 4.500z'],
  ['Step forward', 'M4 1v7L9 4.500zM1.500 3v3'],
  ['To end', 'M9 0v9M2 1v7L7 4.500z']
]

const History = () => (
  <Timeline>
    <ScrollTrack />
    <TimelineBody>
      <Playback>
        {playback.map(([label, d]) => (
          <button key={label} aria-label={label}>
            <svg width="12" height="13" viewBox="-1 -2 12 13"><path d={d} fill="#606060" stroke="#606060" strokeWidth=".9" /></svg>
          </button>
        ))}
      </Playback>
      <Features>
        {history.map((type, i) => (
          <Feature key={i} aria-label={featureNames[type]}>{featureIcons[type]}</Feature>
        ))}
      </Features>
      <Marker>
        <svg width="8" height="22" viewBox="0 0 8 22"><path d="M0 0h8v3L5 6v16H3.500V6L0 3z" fill="#333" /></svg>
      </Marker>
      <SettingsButton aria-label="Timeline settings"><GearShape size={13} /></SettingsButton>
    </TimelineBody>
  </Timeline>
)

export default function App () {
  return (
    <Page>
      <GlobalStyle />
      <Header />
      <Toolbar />
      <Canvas>
        <Backdrop><Scene /></Backdrop>
        <Browser />
        <ViewCubeBox><ViewCube /></ViewCubeBox>
        <CanvasFooter>
          <Panel>
            <PanelHeader>
              <PanelTitle $indent={15}>COMMENTS</PanelTitle>
              <button aria-label="Add comment"><svg width="7" height="7" viewBox="0 0 7 7"><path d="M.5 3.500h6M3.500.5v6" stroke="#555" /></svg></button>
            </PanelHeader>
          </Panel>
          <Navigation />
          <AssistButton aria-label="Assistant">
            <svg width="12" height="12" viewBox="0 0 12 12" fill="none"><circle cx="6" cy="6" r="5.500" fill="#111" /><path d="M6 6h6v6H6z" fill="#111" /><path d="M2.500 8l5-4h1.500v4M5 7.500h4" stroke="#fff" strokeWidth="1.100" /></svg>
          </AssistButton>
        </CanvasFooter>
      </Canvas>
      <History />
    </Page>
  )
}
